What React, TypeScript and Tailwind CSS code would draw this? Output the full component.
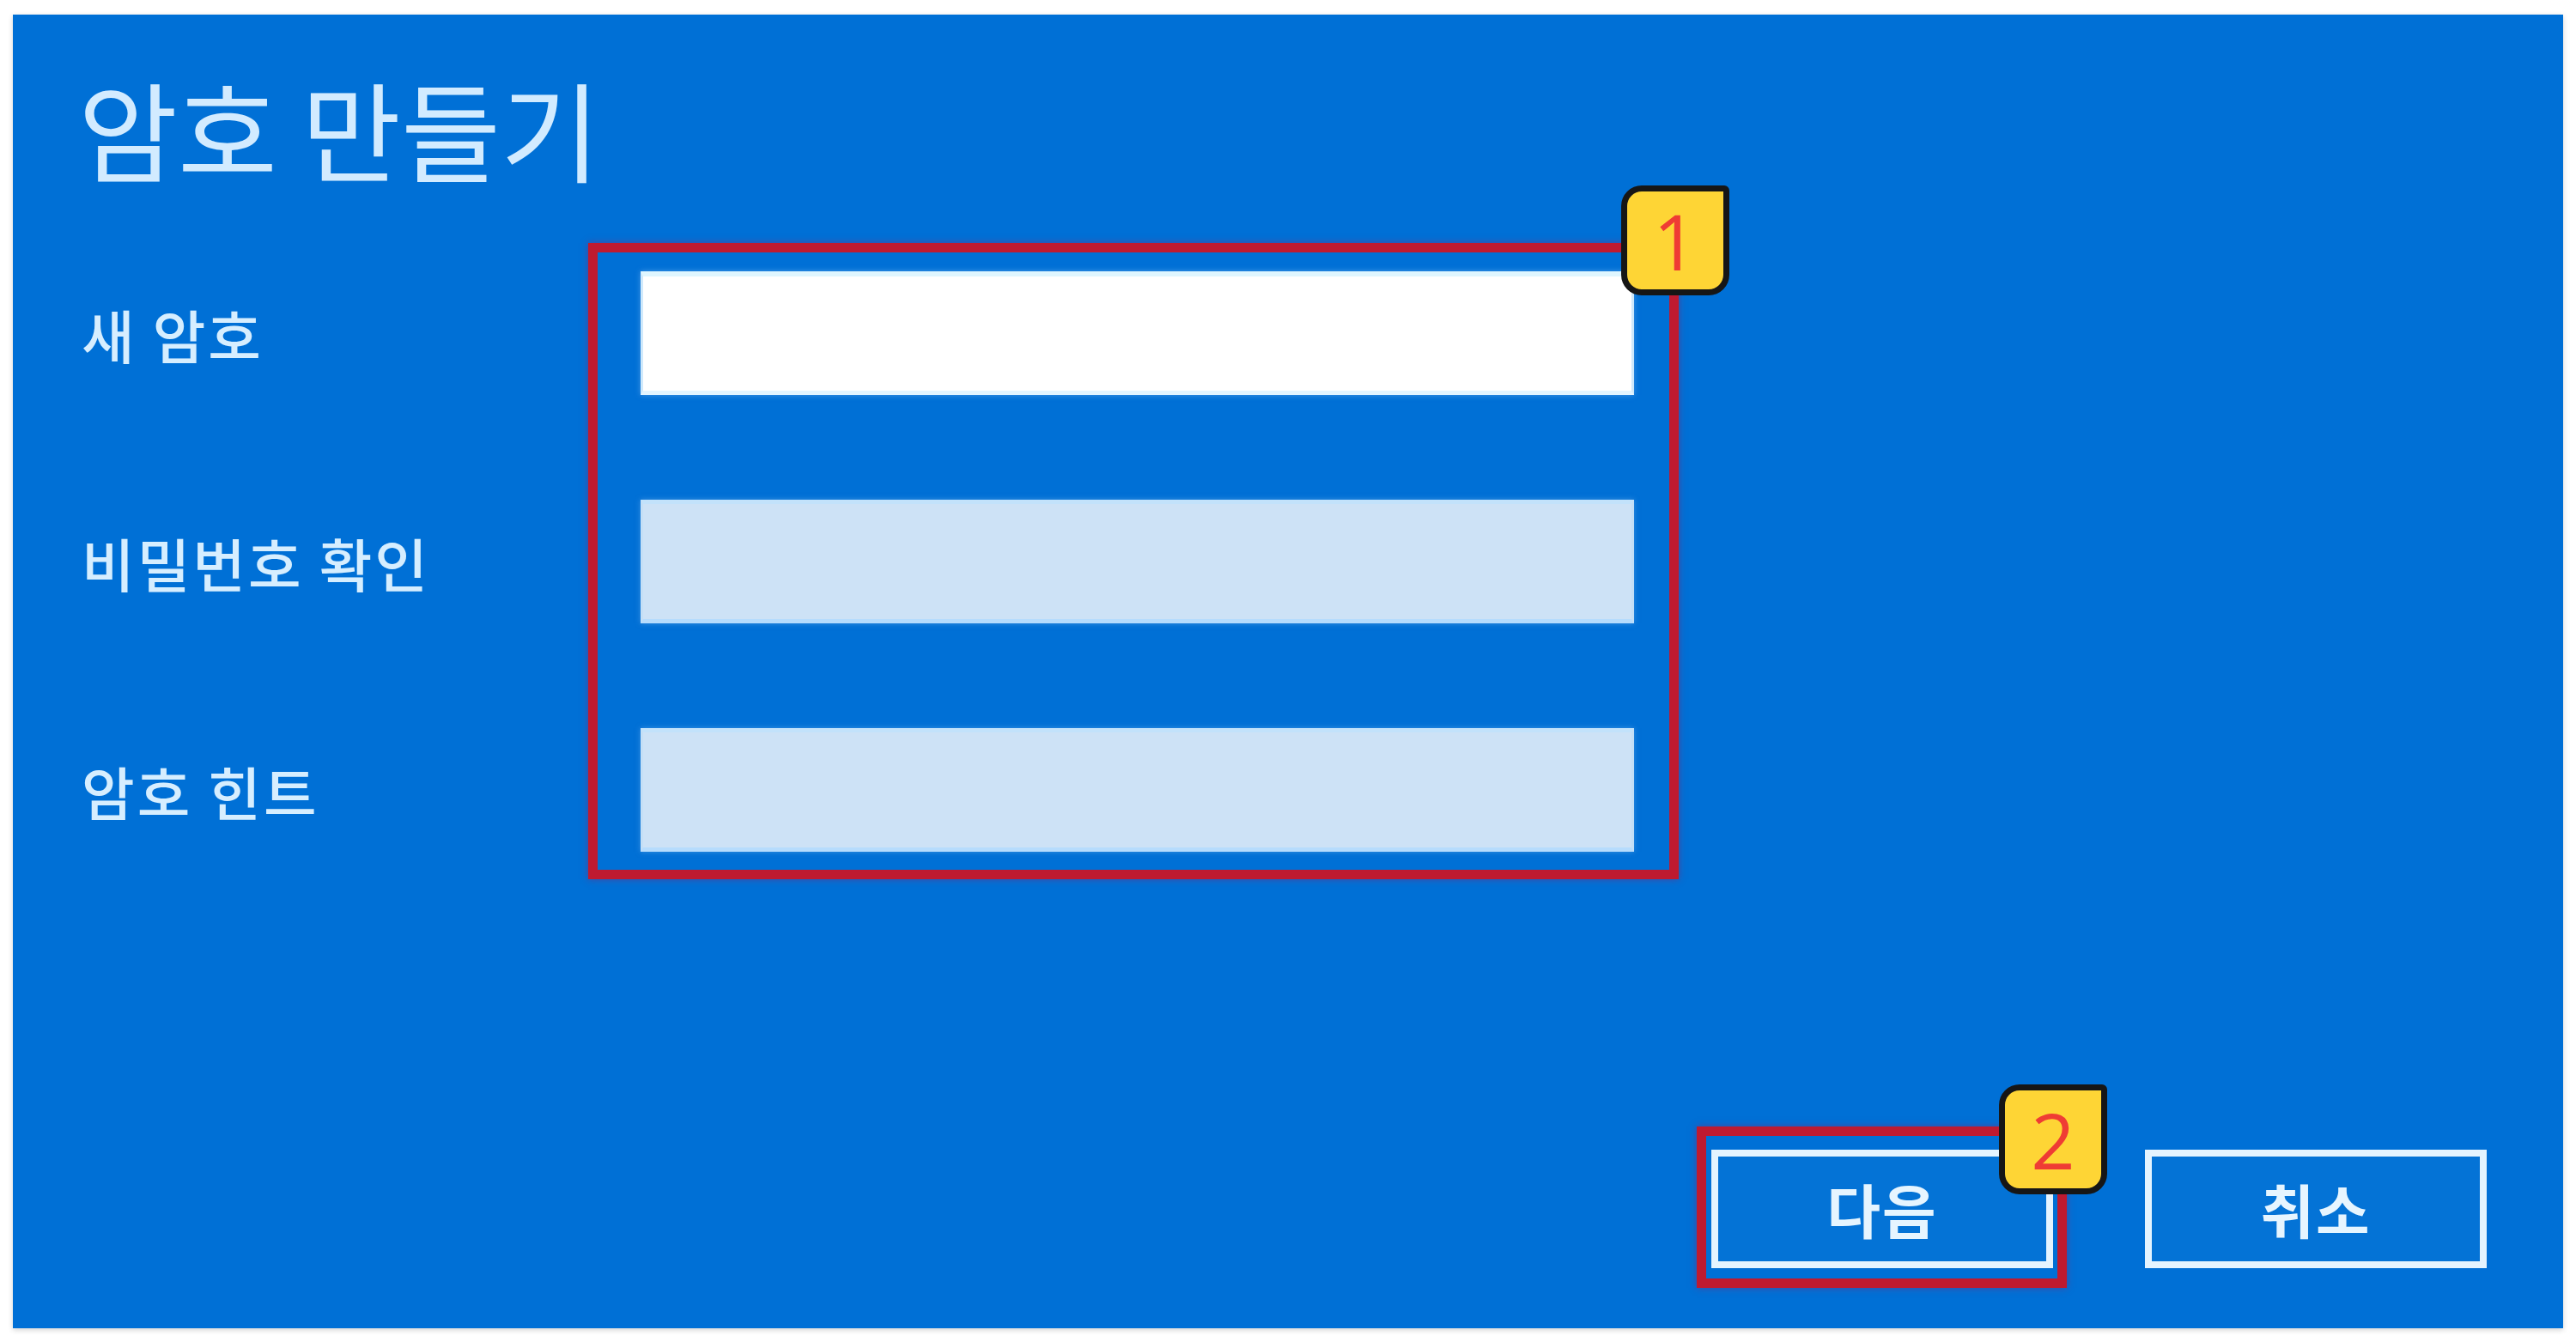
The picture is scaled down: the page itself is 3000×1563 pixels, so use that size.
import React from "react";

const font = { fontFamily: '"Noto Sans CJK KR", "Noto Sans", sans-serif' };

function Badge({ n, className }: { n: string; className: string }) {
  return (
    <div
      className={`absolute w-[126px] h-[128px] bg-[#fed535] border-[7px] border-[#161616] rounded-[24px] rounded-tr-[6px] flex items-center justify-center ${className}`}
    >
      <span
        className="text-[#ef3c34] text-[90px] leading-none"
        style={{ fontFamily: '"Open Sans", "Liberation Sans", sans-serif' }}
      >
        {n}
      </span>
    </div>
  );
}

export default function App() {
  const labels = ["새 암호", "비밀번호 확인", "암호 힌트"];
  return (
    <div className="w-[3000px] h-[1563px] bg-white pl-[15px] pt-[17px]" style={font}>
      <div className="w-[2970px] h-[1530px] bg-[#0070d6] flex flex-col pl-[76px] pt-[68px] shadow-[0_2px_6px_rgba(0,0,0,0.18)]">
        <h1 className="h-[118px] text-[126px] leading-none font-normal text-[#d2ebff] tracking-[0px]">
          암호 만들기
        </h1>

        <div className="flex mt-[80px]">
          <div className="w-[594px] pt-[33px] flex flex-col gap-[122px]">
            {labels.map((l) => (
              <div key={l} className="h-[144px] flex items-center">
                <span className="text-[67px] leading-none font-medium text-[#d6eeff] pl-[4px] tracking-[3px]">
                  {l}
                </span>
              </div>
            ))}
          </div>

          <div className="relative border-[11px] border-[#bf1a30] pl-[50px] pr-[41px] pt-[22px] pb-[21px] shadow-[0_0_8px_rgba(110,50,130,0.7)]">
            <div className="flex flex-col gap-[122px]">
              <div className="w-[1157px] h-[144px] bg-white border-t-[6px] border-b-[5px] border-x-[3px] border-t-[#dff6ff] border-b-[#e2f4ff] border-x-[#cfe9fb] shadow-[0_0_6px_rgba(120,180,240,0.6)]" />
              <div className="w-[1157px] h-[144px] bg-[#cde2f6] border-t-[5px] border-b-[5px] border-x-[3px] border-t-[#c2e2fb] border-b-[#b6dcfd] border-x-[#c4dff6] shadow-[0_0_6px_rgba(120,180,240,0.5)]" />
              <div className="w-[1157px] h-[144px] bg-[#cde2f6] border-t-[5px] border-b-[5px] border-x-[3px] border-t-[#c2e2fb] border-b-[#b6dcfd] border-x-[#c4dff6] shadow-[0_0_6px_rgba(120,180,240,0.5)]" />
            </div>
            <Badge n="1" className="top-[-78px] right-[-70px]" />
          </div>
        </div>

        <div className="mt-auto flex justify-end items-end pr-[89px] pb-[47px] gap-[91px]">
          <div className="relative border-[11px] border-[#bf1a30] pl-[6px] pr-[5px] pt-[16px] pb-[12px] shadow-[0_0_8px_rgba(110,50,130,0.7)]">
            <div className="w-[398px] h-[138px] border-[8px] border-[#e4f4ff] bg-[#0473d6] flex items-center justify-center">
              <span className="text-[68px] leading-none font-bold text-[#e6f5ff] tracking-[2px]">다음</span>
            </div>
            <Badge n="2" className="top-[-60px] right-[-58px]" />
          </div>
          <div className="w-[398px] h-[138px] mb-[23px] border-[8px] border-[#e4f4ff] bg-[#0473d6] flex items-center justify-center">
            <span className="text-[68px] leading-none font-bold text-[#e6f5ff] tracking-[2px]">취소</span>
          </div>
        </div>
      </div>
    </div>
  );
}
